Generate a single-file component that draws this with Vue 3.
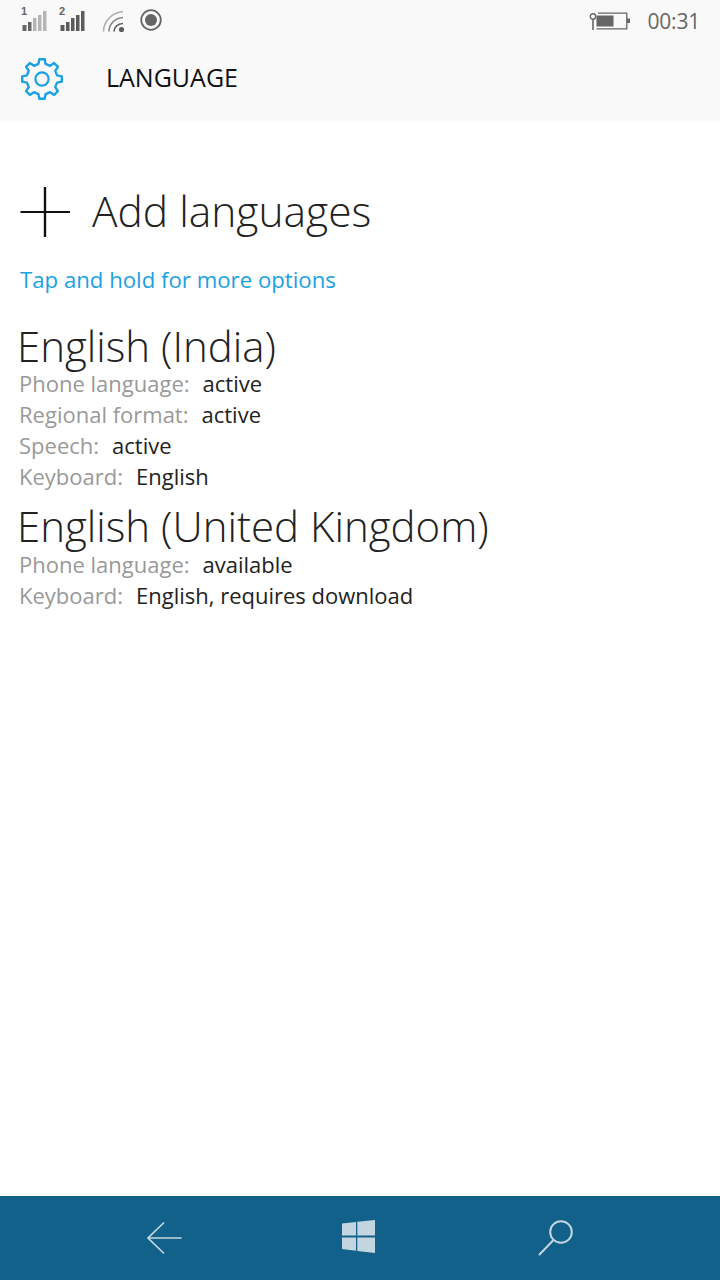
<template>
  <div class="phone">
    <div class="top">
      <div class="status">
        <div class="status__left">
          <svg class="ic-signal" width="28" height="32" viewBox="0 0 28 32">
            <text x="1" y="15" class="sim">1</text>
            <rect x="2.5" y="25" width="4" height="6" fill="#666" />
            <rect x="8" y="22" width="3.5" height="9" fill="#666" />
            <rect x="13" y="18" width="3.5" height="13" fill="#b5b5b5" />
            <rect x="18" y="15" width="3.5" height="16" fill="#b5b5b5" />
            <rect x="23" y="11" width="3.5" height="20" fill="#b5b5b5" />
          </svg>
          <svg class="ic-signal ic-signal--two" width="28" height="32" viewBox="0 0 28 32">
            <text x="1" y="15" class="sim">2</text>
            <rect x="2.5" y="25" width="4" height="6" fill="#5c5c5c" />
            <rect x="8" y="22" width="3.5" height="9" fill="#5c5c5c" />
            <rect x="13" y="18" width="3.5" height="13" fill="#5c5c5c" />
            <rect x="18" y="15" width="3.5" height="16" fill="#5c5c5c" />
            <rect x="23" y="11" width="3.5" height="20" fill="#5c5c5c" />
          </svg>
          <svg class="ic-wifi" width="24" height="24" viewBox="0 0 24 24" fill="none">
            <path d="M1.5 22.5C1.5 12 10 3.5 21 2.5" stroke="#b0b0b0" stroke-width="1.6" />
            <path d="M7 22.5C7 15 13 9 21 8.5" stroke="#8a8a8a" stroke-width="1.6" />
            <path d="M12 22.5C12 18 16 14.5 21 14.5" stroke="#5c5c5c" stroke-width="1.6" />
            <circle cx="19.5" cy="20.5" r="2.6" fill="#5c5c5c" />
          </svg>
          <svg class="ic-rec" width="24" height="24" viewBox="0 0 24 24" fill="none">
            <circle cx="12" cy="12" r="9.8" stroke="#666" stroke-width="1.8" />
            <circle cx="12" cy="12" r="6" fill="#666" />
          </svg>
        </div>
        <div class="status__right">
          <svg class="battery" width="41" height="18" viewBox="0 0 41 18" fill="none">
            <circle cx="4" cy="4.5" r="2.7" stroke="#666" stroke-width="1.4" />
            <path d="M4 7v11" stroke="#666" stroke-width="1.6" />
            <path d="M7.5 16.8h30.3V1.2H9" stroke="#666" stroke-width="1.3" />
            <rect x="7.5" y="3.5" width="17" height="11" fill="#666" />
            <rect x="38" y="6.5" width="3" height="4.5" fill="#666" />
          </svg>
          <span class="clock">00:31</span>
        </div>
      </div>
      <div class="header">
        <svg class="gear" width="44" height="44" viewBox="0 0 44 44" fill="none">
          <path :d="gearPath" stroke="#1ba1e2" stroke-width="2.4" stroke-linejoin="round" />
          <circle cx="22" cy="22" r="6.6" stroke="#1ba1e2" stroke-width="2.2" />
        </svg>
        <span class="header__title">LANGUAGE</span>
      </div>
    </div>

    <main class="content">
      <div class="add">
        <svg width="52" height="50" viewBox="0 0 52 50" fill="none">
          <path d="M0.5 25H50" stroke="#111" stroke-width="2" />
          <path d="M25 0V50" stroke="#111" stroke-width="2.4" />
        </svg>
        <span class="add__label">Add languages</span>
      </div>
      <p class="hint">Tap and hold for more options</p>

      <section v-for="lang in languages" :key="lang.name" class="lang">
        <h2 class="lang__name">{{ lang.name }}</h2>
        <div v-for="row in lang.rows" :key="row[0]" class="lang__row">
          <span class="lang__key">{{ row[0] }}:</span>
          <span class="lang__val">{{ row[1] }}</span>
        </div>
      </section>
    </main>

    <nav class="navbar">
      <svg width="35" height="32" viewBox="0 0 35 32" fill="none">
        <path d="M16.5 1L1 16L16.5 31M1 16H34" stroke="#c3d6e0" stroke-width="1.7" stroke-linecap="round" />
      </svg>
      <svg class="nav-win" width="33" height="33" viewBox="0 0 33 33">
        <path d="M0 3.5L14 1.9V15.5H0ZM15.3 1.7L33 0V15.5H15.3ZM0 17.5H14V30.8L0 29ZM15.3 17.5H33V33L15.3 31Z" fill="#c3d6e0" />
      </svg>
      <svg class="nav-search" width="35" height="36" viewBox="0 0 35 36" fill="none">
        <circle cx="23" cy="12" r="10.8" stroke="#c3d6e0" stroke-width="2" />
        <path d="M15 20.5L1.5 34.5" stroke="#c3d6e0" stroke-width="2" stroke-linecap="round" />
      </svg>
    </nav>
  </div>
</template>

<script setup>
const languages = [
  {
    name: 'English (India)',
    rows: [
      ['Phone language', 'active'],
      ['Regional format', 'active'],
      ['Speech', 'active'],
      ['Keyboard', 'English'],
    ],
  },
  {
    name: 'English (United Kingdom)',
    rows: [
      ['Phone language', 'available'],
      ['Keyboard', 'English, requires download'],
    ],
  },
]

// 8 teeth, outline goes root -> tip -> tip -> root
function buildGear() {
  const pts = []
  const n = 8
  for (let i = 0; i < n; i++) {
    const a = (i / n) * Math.PI * 2 - Math.PI / 2
    const step = (Math.PI * 2) / n
    const list = [
      [15.5, a - step * 0.3],
      [20, a - step * 0.17],
      [20, a + step * 0.17],
      [15.5, a + step * 0.3],
    ]
    for (const [r, t] of list) {
      pts.push(`${(22 + r * Math.cos(t)).toFixed(2)} ${(22 + r * Math.sin(t)).toFixed(2)}`)
    }
  }
  return 'M' + pts.join('L') + 'Z'
}
const gearPath = buildGear()
</script>

<style>
html, body { margin: 0; background: #fff; }
</style>

<style scoped>
.phone {
  width: 720px;
  height: 1280px;
  display: flex;
  flex-direction: column;
  font-family: 'Open Sans', 'Noto Sans', sans-serif;
  background: #fff;
  overflow: hidden;
}
.top {
  height: 121px;
  background: #f9f9f9;
  flex-shrink: 0;
}
.status {
  height: 42px;
  display: flex;
  justify-content: space-between;
  align-items: flex-start;
  padding: 0 20px 0 20px;
}
.status__left { display: flex; align-items: flex-start; }
.ic-signal--two { margin-left: 10px; }
.ic-wifi { margin-left: 16px; margin-top: 9px; }
.ic-rec { margin-left: 13px; margin-top: 8px; }
.sim {
  font-family: 'Liberation Sans', sans-serif;
  font-size: 11px;
  font-weight: 700;
  fill: #666;
}
.status__right { display: flex; align-items: flex-start; gap: 17px; padding-top: 12px; }
.clock { font-size: 21px; line-height: 19px; letter-spacing: -0.2px; color: #666; }
.header {
  height: 79px;
  display: flex;
  align-items: center;
  padding-left: 20px;
}
.gear { flex-shrink: 0; margin-top: -5px; }
.header__title {
  margin-left: 42px;
  margin-top: -9px;
  font-size: 25px;
  color: #111;
}
.content { flex: 1; padding: 66px 18px 0 18px; }
.add { display: flex; align-items: center; padding-left: 2px; height: 50px; }
.add__label { margin-left: 20px; margin-top: -2px; font-size: 42.5px; line-height: 50px; color: #222; font-weight: 300; }
.hint { margin: 28px 0 0 2px; font-size: 22.2px; line-height: 30px; color: #1ba1e2; }
.lang { margin-top: 11px; }
.lang:first-of-type { margin-top: 28px; }
.lang:first-of-type .lang__name { margin-bottom: -1px; }
.lang__name { margin: 0 0 0 -1px; font-size: 42px; line-height: 46px; font-weight: 300; color: #222; }
.lang__row { font-size: 22px; line-height: 31px; display: flex; gap: 13px; padding-left: 1px; }
.lang__key { color: #999; }
.lang__val { color: #222; }
.navbar {
  height: 84px;
  flex-shrink: 0;
  background: #12618a;
  display: flex;
  align-items: center;
  gap: 160px;
  padding-left: 147px;
}
.nav-win { margin-top: -3px; }
.nav-search { margin-left: 3px; }
</style>
